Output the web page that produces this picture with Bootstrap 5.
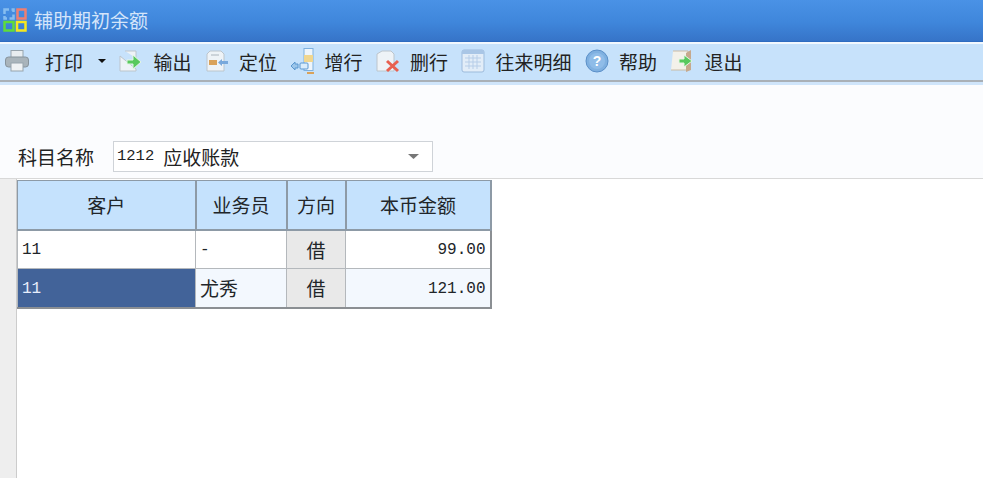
<!DOCTYPE html>
<html lang="zh"><head><meta charset="utf-8"><title>辅助期初余额</title>
<link href="https://cdn.jsdelivr.net/npm/bootstrap@5.3.0/dist/css/bootstrap.min.css" rel="stylesheet">
<style>
html,body{height:478px;overflow:hidden}
body{background:#fff;font-family:"Noto Sans CJK SC","Liberation Sans",sans-serif;color:#222;font-size:19px;line-height:1}
.titlebar{height:42px;background:linear-gradient(#4a92e6,#3f86db 55%,#3674c8);border-bottom:1px solid #2f6cc0;color:#d5e5fa;padding:0 0 2px 3px;gap:7px}
.gapline{height:2px;background:#f2f8fe}
.toolstrip{height:36px;background:#c7e2fb;padding:0 0 2px 4px}
.toolstrip svg{flex:none;display:block}
.printgrp{gap:15px;margin-right:13px}
.toolitem{gap:10.500px;margin-right:13px;white-space:nowrap}
.ruleline{height:2px;background:#a9b0b7}
.paleline{height:3px;background:#cfe5fb}
.filterzone{height:94px;background:#fbfcfe;border-bottom:1px solid #d8d8d8;padding:56px 0 0 18px}
.filterzone label{width:95px;height:31px}
.combo{width:320px;height:31px;background:#fff;border:1px solid #cfd3d8;padding:0 13px 0 3px}
.mono{font-family:"Liberation Mono","Noto Sans CJK SC",monospace}
.codepart{font-size:15.500px;margin-right:9px}
.gutter{width:17px;background:#eee;height:299px;flex:none;border-right:1px solid #ccc}
.gridwrap{padding-top:1px}
table.sheet{width:473px;table-layout:fixed;border-collapse:collapse;margin:0;border:2px solid #8b8f93;border-top-width:1px;border-left-width:1px}
.sheet th,.sheet td{border:1px solid #b4b8bc;padding:0 4px;vertical-align:middle;font-weight:400;font-size:19px}
.sheet thead th{height:49px;background:#c5e2fd;text-align:center;border-color:#8d9aa6;border-width:1px 2px 2px 1px}
.sheet tbody td{height:39px;background:#fff}
.sheet td.mono{font-size:16px;padding-top:2px}
.sheet .dirc{background:#e9e9e9!important;text-align:center}
.sheet .numc{text-align:right}
.sheet tr.sel td{background:#f3f8fe}
.sheet tr.sel td.picked{background:#426399;color:#e8eefc}
</style></head><body>
<div class="titlebar d-flex align-items-center">
<svg width="24" height="24" viewBox="0 0 24 24"><g fill="none" stroke-width="2.500"><path d="M6 1.500H1.500V6M6.500 10.500h4V6.500M1.500 8v2.500H4M8.500 1.500h2V4" stroke="#86bdf0"/><rect x="14.500" y="1.500" width="8" height="9" stroke="#ef7f70"/><rect x="1.500" y="14" width="9" height="8.500" stroke="#5fdc3a"/><rect x="14" y="14" width="8.500" height="8.500" stroke="#f6e81e"/></g></svg>
<span>辅助期初余额</span></div>
<div class="gapline"></div>
<div class="toolstrip d-flex align-items-center">
<div class="printgrp d-flex align-items-center">
<svg width="26" height="24" viewBox="0 0 26 24"><rect x="7" y="1.500" width="12" height="8" fill="#e8edf0" stroke="#97a4ad"/><rect x="1.500" y="8" width="23" height="10" rx="3" fill="#a9b4bb" stroke="#86939c"/><rect x="7" y="14" width="12" height="8" fill="#eef1f3" stroke="#97a4ad"/></svg>
<span>打印</span>
<svg width="8" height="4" viewBox="0 0 8 4"><path d="M0 0h8L4 4z" fill="#111"/></svg>
</div>
<div class="toolitem d-flex align-items-center">
<svg width="24" height="24" viewBox="0 0 24 24"><path d="M6 2h11v7m0 11v2H1V7z" fill="#eef3f7" stroke="#bcc5cc"/><path d="M8 11h6V6l8 7-8 7v-5H8z" fill="#58c95e" stroke="#e4f6e4"/></svg>
<span>输出</span></div>
<div class="toolitem d-flex align-items-center">
<svg width="24" height="24" viewBox="0 0 24 24"><path d="M5 2h11l3 3v17H2V5z" fill="#eef3f7" stroke="#bcc5cc"/><rect x="4" y="11" width="8" height="5" fill="#d9a25a"/><path d="M13 13.500l4-3.500v2h6v3h-6v2z" fill="#79a9dc"/><path d="M6 6h8" stroke="#aab4bc"/></svg>
<span>定位</span></div>
<div class="toolitem d-flex align-items-center">
<svg width="24" height="28" viewBox="0 0 24 28"><rect x="14" y="1.500" width="9" height="22" fill="#eef5fb" stroke="#7fb1df"/><rect x="14" y="8" width="9" height="7" fill="#f0d68f"/><rect x="10" y="16" width="8" height="6" rx="1" fill="#d9ecfb" stroke="#5b97cf"/><path d="M1 19l4-4v2h3v4H5v2z" fill="#9cc6ea" stroke="#5b97cf"/><path d="M17 26h7" stroke="#d9a25a" stroke-width="2"/></svg>
<span>增行</span></div>
<div class="toolitem d-flex align-items-center">
<svg width="24" height="24" viewBox="0 0 24 24"><path d="M6 2h9l3 3v17H1V5z" fill="#eef3f7" stroke="#bcc5cc"/><path d="M11 12l11 10M22 12L11 22" stroke="#e8604f" stroke-width="3"/></svg>
<span>删行</span></div>
<div class="toolitem d-flex align-items-center">
<svg width="24" height="24" viewBox="0 0 24 24"><rect x="1" y="1" width="22" height="22" rx="2" fill="#e2edf8" stroke="#9dbbdc"/><rect x="1" y="1" width="22" height="4" fill="#a9c6e6"/><path d="M4 9h16M4 13h16M4 17h16M8 6v14M12 6v14M16 6v14" stroke="#b6cde8"/></svg>
<span>往来明细</span></div>
<div class="toolitem d-flex align-items-center">
<svg width="24" height="24" viewBox="0 0 24 24"><circle cx="12" cy="12" r="11" fill="#7fb0e0" stroke="#5b8fc8"/><circle cx="12" cy="12" r="8" fill="#8fbce8"/><text x="12" y="17" text-anchor="middle" fill="#fff" font-size="14" font-weight="700" font-family="Liberation Sans">?</text></svg>
<span>帮助</span></div>
<div class="toolitem d-flex align-items-center">
<svg width="24" height="24" viewBox="0 0 24 24"><path d="M3 2h15v19H1" fill="#f3f1ea" stroke="#c9bba6"/><path d="M16 4l5-3v20l-5 2z" fill="#c6a98d"/><path d="M9 10h5V6l8 6-8 6v-4H9z" fill="#58c95e" stroke="#e4f6e4"/></svg>
<span>退出</span></div>
</div>
<div class="ruleline"></div>
<div class="paleline"></div>
<div class="filterzone d-flex align-items-start">
<label class="d-flex align-items-center">科目名称</label>
<div class="combo d-flex align-items-center justify-content-between">
<span class="d-flex align-items-center"><span class="mono codepart">1212</span>应收账款</span>
<svg width="11" height="5" viewBox="0 0 11 5"><path d="M0 0h11L5.500 5z" fill="#777"/></svg>
</div></div>
<div class="d-flex">
<div class="gutter"></div>
<div class="gridwrap">
<table class="table sheet">
<colgroup><col style="width:178px"><col style="width:91px"><col style="width:59px"><col style="width:145px"></colgroup>
<thead><tr><th>客户</th><th>业务员</th><th>方向</th><th>本币金额</th></tr></thead>
<tbody>
<tr><td class="mono">11</td><td class="mono">-</td><td class="dirc">借</td><td class="numc mono">99.00</td></tr>
<tr class="sel"><td class="mono picked">11</td><td>尤秀</td><td class="dirc">借</td><td class="numc mono">121.00</td></tr>
</tbody></table>
</div></div>
</body></html>
